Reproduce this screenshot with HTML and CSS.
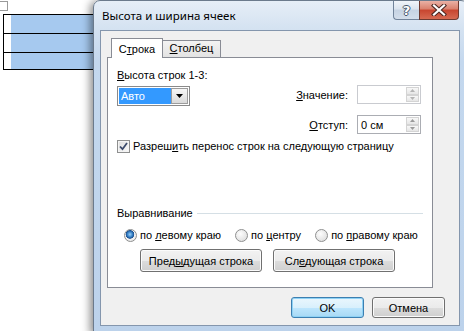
FILE: index.html
```html
<!DOCTYPE html>
<html lang="ru">
<head>
  <meta charset="UTF-8" />
  <title>Высота и ширина ячеек</title>
  <link rel="stylesheet" href="styles.css">
</head>
<body>
  <div class="desk">
    <div class="move-handle"></div>
    <div class="doc">
      <div class="doc-row"><div class="doc-cell"></div><div class="doc-sel"></div></div>
      <div class="doc-row"><div class="doc-cell"></div><div class="doc-sel"></div></div>
      <div class="doc-row short"><div class="doc-cell"></div><div class="doc-sel"></div></div>
    </div>
  </div>

  <div class="window">
    <div class="titlebar">
      <span class="title">Высота и ширина ячеек</span>
      <div class="caption-buttons">
        <div class="cap-btn help">?</div>
        <div class="cap-btn close">
          <svg width="16" height="12" viewBox="0 0 16 12">
            <path d="M3 1.5L13 10.5M13 1.5L3 10.5" stroke="#4a2620" stroke-width="4.2" stroke-linecap="square"/>
            <path d="M3 1.5L13 10.5M13 1.5L3 10.5" stroke="#ffffff" stroke-width="2.2" stroke-linecap="square"/>
          </svg>
        </div>
      </div>
    </div>

    <div class="client">
      <div class="tabs-area">
        <div class="tabstrip">
          <div class="tab active">С<u>т</u>рока</div>
          <div class="tab"><u>С</u>толбец</div>
        </div>

        <div class="panel">
          <div class="row-top">
            <div class="left-col">
              <div class="label"><u>В</u>ысота строк 1-3:</div>
              <div class="combo">
                <span class="combo-value">Авто</span>
                <span class="combo-btn">
                  <svg width="7" height="4" viewBox="0 0 7 4"><path d="M0 0H7L3.5 4Z" fill="#000"/></svg>
                </span>
              </div>
            </div>

            <div class="fields">
              <span class="field-label"><u>З</u>начение:</span>
              <div class="input disabled">
                <span class="input-text"></span>
                <div class="spin">
                  <span class="spin-btn"><svg width="5" height="3" viewBox="0 0 5 3"><path d="M0 3H5L2.5 0Z" fill="#b4b4b4"/></svg></span>
                  <span class="spin-btn"><svg width="5" height="3" viewBox="0 0 5 3"><path d="M0 0H5L2.5 3Z" fill="#b4b4b4"/></svg></span>
                </div>
              </div>

              <span class="field-label"><u>О</u>тступ:</span>
              <div class="input">
                <span class="input-text">0 см</span>
                <div class="spin">
                  <span class="spin-btn"><svg width="5" height="3" viewBox="0 0 5 3"><path d="M0 3H5L2.5 0Z" fill="#9a9a9a"/></svg></span>
                  <span class="spin-btn"><svg width="5" height="3" viewBox="0 0 5 3"><path d="M0 0H5L2.5 3Z" fill="#9a9a9a"/></svg></span>
                </div>
              </div>
            </div>
          </div>

          <label class="check-row">
            <span class="checkbox">
              <svg width="9" height="9" viewBox="0 0 9 9"><path d="M1 4.5L3.5 7.2L8 1" stroke="#3b4a6b" stroke-width="1.8" fill="none"/></svg>
            </span>
            <span class="opt-text">Разреш<u>и</u>ть перенос строк на следующую страницу</span>
          </label>

          <div class="group-head">
            <span>Выравнивание</span>
            <span class="group-line"></span>
          </div>

          <div class="radio-row">
            <label class="radio-item"><span class="radio checked"></span><span class="opt-text">по <u>л</u>евому краю</span></label>
            <label class="radio-item"><span class="radio"></span><span class="opt-text">по <u>ц</u>ентру</span></label>
            <label class="radio-item"><span class="radio"></span><span class="opt-text">по <u>п</u>равому краю</span></label>
          </div>

          <div class="nav-buttons">
            <button class="btn wide">Пред<u>ы</u>дущая строка</button>
            <button class="btn wide">Сл<u>е</u>дующая строка</button>
          </div>
        </div>
      </div>

      <div class="footer">
        <button class="btn default">OK</button>
        <button class="btn">Отмена</button>
      </div>
    </div>
  </div>
</body>
</html>
```

FILE: styles.css
```css
:root {
  --face: #f0f0f0;
  --tab-border: #898c95;
  --frame-line: #6b7a8c;
  --select: #a6c9ef;
}

* {
  box-sizing: border-box;
  margin: 0;
  padding: 0;
}

html, body {
  width: 464px;
  height: 331px;
  overflow: hidden;
}

body {
  position: relative;
  background: #fff;
  color: #000;
  font-family: 'Liberation Sans', Arial, sans-serif;
  font-size: 11px;
}

u {
  text-decoration: underline;
  text-underline-offset: 1px;
}

.opt-text {
  white-space: nowrap;
}

/* document behind the dialog */
.desk {
  padding-top: 1px;
}

.move-handle {
  width: 8px;
  height: 10px;
  border: 1px solid #9a9a9a;
  border-left: none;
}

.doc {
  width: 120px;
  margin: 3px 0 0 3px;
  border-top: 1px solid #000;
  border-left: 1px solid #000;
}

.doc-row {
  display: flex;
  height: 19px;
  border-bottom: 1px solid #000;
}

.doc-row.short {
  height: 17px;
}

.doc-cell {
  width: 7px;
}

.doc-sel {
  flex: 1;
  background: var(--select);
}

/* dialog window */
.window {
  position: absolute;
  left: 93px;
  top: 0;
  width: 375px;
  height: 334px;
  padding: 0 7px 7px 6px;
  border: 1px solid var(--frame-line);
  border-radius: 7px 7px 0 0;
  background: linear-gradient(180deg, #e6eef7 0, #d4e2f1 28px, #c4d8ee 60px, #bcd2eb 100%);
  box-shadow: -3px 1px 9px rgba(0, 0, 0, 0.45);
}

.titlebar {
  display: flex;
  align-items: center;
  height: 29px;
}

.title {
  padding-left: 2px;
  font-family: 'Noto Sans', 'Open Sans', sans-serif;
  font-size: 11.5px;
}

.caption-buttons {
  display: flex;
  align-self: flex-start;
  margin-left: auto;
  margin-right: 1px;
}

.cap-btn {
  height: 19px;
  display: flex;
  align-items: center;
  justify-content: center;
}

.help {
  width: 26px;
  border: 1px solid #71839a;
  border-top: none;
  border-right: none;
  border-radius: 0 0 0 4px;
  background: linear-gradient(180deg, #f1f5fa 0, #dbe4ef 45%, #c6d3e3 50%, #d3deeb 100%);
  color: #fff;
  font-family: 'DejaVu Sans', sans-serif;
  font-size: 13px;
  font-weight: 700;
  text-shadow: 1px 0 0 #45556b, -1px 0 0 #45556b, 0 1px 0 #45556b, 0 -1px 0 #45556b;
}

.close {
  width: 40px;
  border: 1px solid #6e3a31;
  border-top: none;
  border-radius: 0 0 4px 0;
  background: linear-gradient(180deg, #eab1a5 0, #d9806d 45%, #c8452f 50%, #d66a52 100%);
}

.client {
  height: 296px;
  border: 1px solid #8496ad;
  background: var(--face);
}

.tabs-area {
  padding: 7px 0 0 6px;
}

.tabstrip {
  position: relative;
  z-index: 1;
  display: flex;
  align-items: flex-end;
  height: 20px;
  margin-bottom: -1px;
  padding-left: 4px;
}

.tab {
  width: 58px;
  height: 18px;
  border: 1px solid var(--tab-border);
  border-left: none;
  background: linear-gradient(180deg, #f3f3f3, #e3e3e3);
  text-align: center;
  line-height: 15px;
}

.tab.active {
  width: 52px;
  height: 20px;
  border-left: 1px solid var(--tab-border);
  border-bottom: none;
  background: #fff;
  line-height: 21px;
}

.panel {
  width: 326px;
  height: 231px;
  padding: 10px 11px 0 9px;
  border: 1px solid var(--tab-border);
  background: #fff;
}

.row-top {
  display: flex;
  justify-content: space-between;
}

.label {
  line-height: 14px;
}

.combo {
  display: flex;
  width: 73px;
  height: 20px;
  margin-top: 4px;
  padding: 1px;
  border: 1px solid #8a8a8a;
  background: #fff;
}

.combo-value {
  flex: 1;
  padding-left: 2px;
  background: #3399ff;
  color: #fff;
  line-height: 16px;
}

.combo-btn {
  width: 17px;
  display: flex;
  align-items: center;
  justify-content: center;
  border: 1px solid #9c9c9c;
  background: linear-gradient(180deg, #f6f6f6, #dadada);
}

.fields {
  display: grid;
  grid-template-columns: auto 64px;
  align-items: center;
  justify-items: end;
  column-gap: 9px;
  row-gap: 11px;
  margin-top: 17px;
}

.input {
  display: flex;
  align-items: center;
  width: 64px;
  height: 19px;
  padding: 1px 1px 1px 3px;
  border: 1px solid #abadb3;
  background: #fff;
}

.input.disabled {
  border-color: #c9cbd0;
}

.input-text {
  flex: 1;
}

.spin {
  display: flex;
  flex-direction: column;
  width: 13px;
  height: 15px;
}

.spin-btn {
  flex: 1;
  display: flex;
  align-items: center;
  justify-content: center;
  border: 1px solid #d4d4d4;
  background: linear-gradient(180deg, #f8f8f8, #e6e6e6);
}

.check-row {
  display: flex;
  align-items: center;
  gap: 3px;
  height: 14px;
  margin-top: 5px;
}

.checkbox {
  width: 13px;
  height: 13px;
  display: flex;
  align-items: center;
  justify-content: center;
  border: 1px solid #8e8f8f;
  background: linear-gradient(135deg, #dcdcdc, #fbfbfb);
  box-shadow: inset 0 0 0 1px #f4f4f4;
}

.group-head {
  display: flex;
  align-items: center;
  height: 14px;
  margin-top: 53px;
}

.group-line {
  flex: 1;
  margin: 1px -2px 0 4px;
  border-top: 1px solid #d5dfe5;
}

.radio-row {
  display: flex;
  align-items: center;
  gap: 14px;
  height: 14px;
  margin-top: 8px;
  padding-left: 7px;
}

.radio-item {
  display: flex;
  align-items: center;
  gap: 3px;
}

.radio {
  width: 13px;
  height: 13px;
  border: 1px solid #8e8f8f;
  border-radius: 50%;
  background: radial-gradient(circle at 40% 35%, #fdfdfd, #d8d8d8);
}

.radio.checked {
  background: radial-gradient(circle at 45% 40%, #9fd2f7 0, #3a84c9 2.5px, #1a4f8f 4px, #f2f2f2 4.6px, #dedede 100%);
}

.nav-buttons {
  display: flex;
  gap: 11px;
  margin-top: 7px;
  padding-left: 23px;
}

.btn {
  height: 21px;
  width: 73px;
  border: 1px solid #707070;
  border-radius: 3px;
  background: linear-gradient(180deg, #f2f2f2 0, #ebebeb 50%, #dddddd 51%, #cfcfcf 100%);
  box-shadow: inset 0 0 0 1px #fbfbfb;
  font-family: inherit;
  font-size: 11px;
  color: #000;
}

.btn.wide {
  width: 122px;
  height: 23px;
}

.btn.default {
  border-color: #3c7fb1;
  box-shadow: inset 0 0 0 1px #8fd2f5;
  background: linear-gradient(180deg, #eaf6fd 0, #d9f0fc 50%, #bee6fd 51%, #a7d9f5 100%);
}

.footer {
  display: flex;
  justify-content: flex-end;
  gap: 8px;
  padding: 9px 14px 0 0;
}
```
